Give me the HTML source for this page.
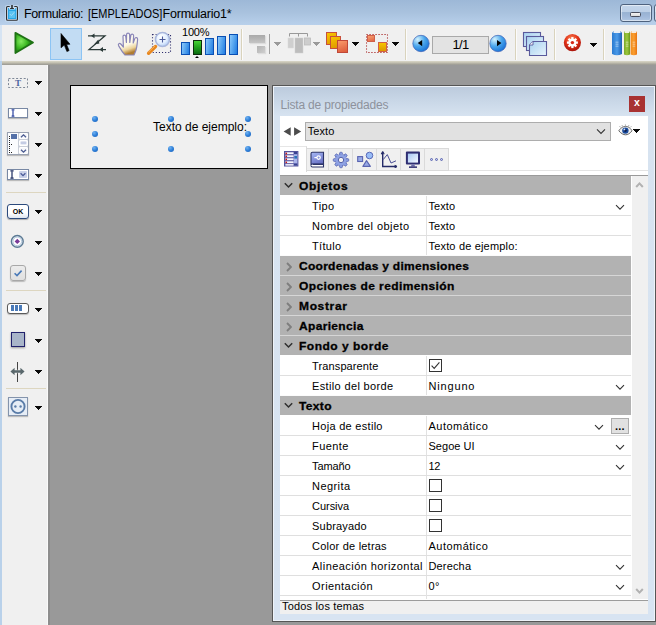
<!DOCTYPE html>
<html lang="es"><head><meta charset="utf-8"><title>Formulario: [EMPLEADOS]Formulario1*</title>
<style>
html,body{margin:0;padding:0}
body{width:656px;height:625px;overflow:hidden;background:#999999;position:relative;font-family:"Liberation Sans",sans-serif;font-size:11px;color:#000}
div,span,svg{position:absolute;box-sizing:border-box}
.t{white-space:nowrap;line-height:1;}
#titlebar{left:0;top:0;width:656px;height:25px;background:linear-gradient(#9db8d7 0,#a9c2de 50%,#b8d0eb 100%)}
#toolbar{left:2px;top:25px;width:654px;height:36px;background:#f0f0f0}
#lstrip{left:0;top:25px;width:2px;height:600px;background:#b9d1ea}
#tan{left:2px;top:61px;width:654px;height:4px;background:linear-gradient(#dad7c8,#c4c1b2 40%,#a5a399 80%,#9a9a96)}
#ltool{left:2px;top:65px;width:46px;height:560px;background:#f0f0f0}
#ltoolb{left:48px;top:65px;width:2px;height:560px;background:#8d8d8d}
.sep{width:1px;height:31px;top:29px;background:#d9d3bd;box-shadow:1px 0 0 #fbfbfb}
.lsep{left:6px;width:40px;height:1px;background:#ddd6c0}
.arr{width:0;height:0;margin-left:-.300px;border-left:3.800px solid transparent;border-right:3.800px solid transparent;border-top:4.500px solid #0c0c0c}
.arrg{width:0;height:0;margin-left:-.300px;border-left:3.800px solid transparent;border-right:3.800px solid transparent;border-top:4.500px solid #999}
#form{left:70px;top:85px;width:198px;height:84px;background:#f0f0f0;border:1px solid #000}
.h{width:6.600px;height:6.600px;border-radius:50%;background:radial-gradient(circle at 35% 30%,#6fb2f2 0,#2e7fd8 50%,#1a5fb8 100%)}
#panel{left:272px;top:85px;width:384px;height:537px;background:linear-gradient(#bbcadc 0,#c9d7e7 15px,#d7e3f0 30px,#d8e4f2 100%);border:1px solid #565656;box-shadow:inset 1px 1px 0 #eef3f9,inset -1px -1px 0 #eef3f9}
#content{left:280px;top:116px;width:368px;height:484px;background:#fff}
#footer{left:280px;top:600px;width:368px;height:14px;background:#f0f0f0;border-top:1px solid #9c9c9c}
.hd{left:280px;width:351px;height:20px;background:#b2b2b2;border-top:1px solid #d2d2d2}
.rw{left:280px;width:351px;height:20px;border-top:1px solid #dfdfdf}
.cb{left:429px;width:13px;height:13px;border:1px solid #333;background:#fff}
</style></head><body>

<div id="titlebar"></div>
<svg style="left:0;top:0" width="24" height="25" viewBox="0 0 24 25">
<rect x="5" y="5" width="14" height="16.800" rx="1.500" fill="#cfe4f8" opacity=".55"/>
<rect x="6.550" y="6.550" width="10.900" height="13.700" rx="1" fill="#cbe0f4" stroke="#2f2f2f" stroke-width="1.100"/>
<rect x="9.700" y="5.800" width="4.600" height="1.600" fill="#b4cce6"/>
<path d="M8 8H9V9.500H15.300V8H16.300V19H8Z" fill="#29a6e6"/>
<rect x="9.200" y="11" width="6" height="7" fill="#5ac2f2"/>
<path d="M10 14.200L11.400 15.600 14.200 12.400" fill="none" stroke="#d4eefc" stroke-width=".9" stroke-dasharray=".9 .5"/>
<rect x="11.200" y="5" width="1.600" height="3.200" fill="#2f2f2f"/>
<rect x="10" y="8" width="4" height=".9" rx=".3" fill="#2f2f2f"/>
</svg>
<span class="t" id="t1" style="left:24px;top:7.600px;font-size:12.500px;letter-spacing:-0.372px;">Formulario:</span>
<span class="t" id="t2" style="left:88.400px;top:7.600px;font-size:12.500px;transform:scaleX(.878);transform-origin:0 0">[EMPLEADOS]</span>
<span class="t" id="t3" style="left:162.600px;top:7.600px;font-size:12.500px;letter-spacing:-0.233px;">Formulario1*</span>
<div style="left:620px;top:4px;width:32px;height:17.500px;border:1px solid #4e627e;border-radius:3px;background:linear-gradient(#c4d6eb 0,#bccfe6 45%,#98b2d2 47%,#a2badb 75%,#b0c7e2 100%);box-shadow:inset 0 0 0 1px rgba(255,255,255,.5)"></div>
<div style="left:630px;top:12px;width:11px;height:5px;border:1px solid #4a4e5c;border-radius:1.500px;background:linear-gradient(#f4f4f4,#dcdcdc)"></div>
<div style="left:654px;top:4px;width:8px;height:17.500px;border:1px solid #4e627e;border-radius:3px;background:linear-gradient(#c4d6eb 0,#bccfe6 45%,#98b2d2 47%,#a2badb 75%,#b0c7e2 100%);box-shadow:inset 0 0 0 1px rgba(255,255,255,.5)"></div>
<div id="toolbar"></div><div id="lstrip"></div><div style="left:0;top:25px;width:2px;height:36px;background:#d6e4f3"></div><div id="tan"></div>
<svg style="left:12px;top:30px" width="24" height="26" viewBox="0 0 24 26">
<defs><radialGradient id="pg" cx=".32" cy=".42" r=".62"><stop offset="0" stop-color="#86ea62"/><stop offset=".55" stop-color="#3cb822"/><stop offset="1" stop-color="#17740f"/></radialGradient></defs>
<path d="M3.400 2.800 L21 12.600 L3.400 23 Z" fill="url(#pg)" stroke="#1e7214" stroke-width="1.800" stroke-linejoin="round"/>
</svg>
<div style="left:50px;top:28px;width:32px;height:32px;background:#c2dcf3;border:1px solid #8cc4f4"></div>
<svg style="left:58px;top:32px" width="16" height="24" viewBox="0 0 16 24">
<path d="M3 1.500 L3 15.800 L6.300 13.100 L8.900 19.600 L11.100 18.600 L8.600 12.400 L12 12.200 Z" fill="#000" stroke="#000" stroke-width=".6" stroke-linejoin="round"/>
</svg>
<svg style="left:86px;top:31px" width="22" height="24" viewBox="0 0 22 24">
<g fill="none" stroke="#2b3a38" stroke-width="1.250"><path d="M2 4.800 H19 L3 18.500 H20"/></g>
<path d="M8.500 2.400 L5 4.800 L8.500 7.200 Z M17 16 L13.400 18.500 L17 21 Z M12.300 8.600 L8 13.400 L13.400 12.400 Z" fill="#2b3a38"/>
</svg>
<svg style="left:116px;top:31px" width="26" height="26" viewBox="0 0 26 26">
<defs><linearGradient id="hg" x1="0" y1="0" x2="0.3" y2="1"><stop offset="0" stop-color="#ffffff"/><stop offset=".62" stop-color="#fdf8e4"/><stop offset=".82" stop-color="#ecd49c"/><stop offset="1" stop-color="#b07c30"/></linearGradient></defs>
<path d="M9 24 C6 21 4 17 2.6 14.6 C1.8 13 3.4 11.6 4.8 13 L7.4 16 L7 5.6 C7 3.6 9.6 3.6 9.8 5.6 L10.4 11.4 L10.6 3.6 C10.6 1.6 13.4 1.6 13.6 3.6 L13.8 11.4 L14.8 4.4 C15 2.6 17.6 2.8 17.6 4.8 L17.2 12 L18.8 7.6 C19.4 5.8 21.8 6.4 21.6 8.4 C21.2 12.8 21 16 20 19 C19.4 21 18.6 22.6 18 24 Z" fill="url(#hg)" stroke="#8a86b8" stroke-width="1.2" stroke-linejoin="round"/>
</svg>
<svg style="left:146px;top:30px" width="28" height="28" viewBox="0 0 28 28">
<defs><radialGradient id="mg" cx=".4" cy=".35" r=".7"><stop offset="0" stop-color="#fff"/><stop offset=".6" stop-color="#e2efff"/><stop offset="1" stop-color="#a9c6f2"/></radialGradient></defs>
<rect x="6.5" y="4.5" width="18" height="18" fill="none" stroke="#2a2a6a" stroke-width="1.100" stroke-dasharray="1.100 2"/>
<path d="M2.600 23.200 L9.500 16.500" stroke="#e8871e" stroke-width="3.400" stroke-linecap="round"/>
<path d="M2.8 21.8 L8.6 16.4" stroke="#f7b45e" stroke-width="1" stroke-linecap="round"/>
<circle cx="16.5" cy="9.5" r="7" fill="url(#mg)" stroke="#a9b7dc" stroke-width="1.6"/>
<path d="M16.5 6.5v6M13.5 9.5h6" stroke="#4a5a9a" stroke-width="1.1"/>
</svg>
<span class="t" id="pct" style="left:182px;top:26.5px;font-size:11px;letter-spacing:-0.214px;">100%</span>
<div style="left:181px;top:42px;width:9px;height:13px;border:1px solid #0a4fb4;background:linear-gradient(100deg,#8cc8fa 0,#5aa8f0 45%,#1f7ae0 100%)"></div>
<div style="left:193px;top:40px;width:9px;height:15px;border:1px solid #0c2e0c;background:linear-gradient(#46d232,#1fa01a 50%,#0a6a10)"></div>
<div style="left:205px;top:38px;width:9px;height:17px;border:1px solid #0a4fb4;background:linear-gradient(100deg,#8cc8fa 0,#5aa8f0 45%,#1f7ae0 100%)"></div>
<div style="left:217px;top:36px;width:9px;height:19px;border:1px solid #0a4fb4;background:linear-gradient(100deg,#8cc8fa 0,#5aa8f0 45%,#1f7ae0 100%)"></div>
<div style="left:229px;top:34px;width:9px;height:21px;border:1px solid #0a4fb4;background:linear-gradient(100deg,#8cc8fa 0,#5aa8f0 45%,#1f7ae0 100%)"></div>
<div style="left:195px;top:56px;width:0;height:0;border-left:2.5px solid transparent;border-right:2.5px solid transparent;border-bottom:2.5px solid #000"></div>
<div class="sep" style="left:241px"></div>
<div style="left:249px;top:35px;width:16px;height:8px;background:linear-gradient(#a9a9a9,#c4c4c4);box-shadow:1px 1px 1px #ddd"></div>
<div style="left:257px;top:46px;width:8px;height:7px;background:linear-gradient(135deg,#b2b2b2,#cfcfcf);box-shadow:1px 1px 1px #ddd"></div>
<div style="left:269px;top:34px;width:1px;height:20px;background:#a0a0a0"></div>
<svg style="left:274px;top:42px" width="7" height="4" viewBox="0 0 7 4" shape-rendering="crispEdges"><path d="M0 0h7v1h-1v1h-1v1h-1v1h-1v-1h-1v-1h-1v-1h-1z" fill="#9a9a9a"/></svg>
<svg style="left:286px;top:31px" width="28" height="26" viewBox="0 0 28 26">
<path d="M3.5 5.5V2.5H21.5V5.5M12.5 2.5V5.5" fill="none" stroke="#999" stroke-width="1"/>
<rect x="2" y="7" width="5.5" height="10" fill="#cfcfcf" stroke="#d8d8d8" stroke-width=".5"/>
<rect x="9" y="7" width="8" height="15" fill="#bdbdbd" stroke="#d0d0d0" stroke-width=".5"/>
<rect x="18.5" y="7" width="6" height="7" fill="#cdcdcd" stroke="#bbb" stroke-width=".8"/>
</svg>
<svg style="left:313px;top:42px" width="7" height="4" viewBox="0 0 7 4" shape-rendering="crispEdges"><path d="M0 0h7v1h-1v1h-1v1h-1v1h-1v-1h-1v-1h-1v-1h-1z" fill="#9a9a9a"/></svg>
<div style="left:326px;top:32px;width:11px;height:13px;border:1px solid #c8503c;background:linear-gradient(160deg,#f8c400,#e09a00)"></div>
<div style="left:330px;top:36px;width:11px;height:13px;border:1px solid #c8503c;background:linear-gradient(160deg,#f8c400,#dc9400)"></div>
<div style="left:337px;top:40px;width:11px;height:13px;border:1px solid #c04838;background:linear-gradient(160deg,#fa9a6a,#dc5a3a)"></div>
<svg style="left:352px;top:42px" width="7" height="4" viewBox="0 0 7 4" shape-rendering="crispEdges"><path d="M0 0h7v1h-1v1h-1v1h-1v1h-1v-1h-1v-1h-1v-1h-1z" fill="#0a0a0a"/></svg>
<svg style="left:366px;top:34px" width="22" height="19" viewBox="0 0 22 19"><rect x=".5" y=".5" width="21" height="18" fill="none" stroke="#a01010" stroke-width="1.100" stroke-dasharray="1.100 1.900"/></svg>
<div style="left:367px;top:35px;width:8px;height:7px;border:1px solid #d0604a;background:linear-gradient(160deg,#f8a070,#e06444)"></div>
<div style="left:378px;top:42px;width:9px;height:10px;border:1px solid #d06048;background:linear-gradient(#f8c400,#dc9800)"></div>
<svg style="left:392px;top:42px" width="7" height="4" viewBox="0 0 7 4" shape-rendering="crispEdges"><path d="M0 0h7v1h-1v1h-1v1h-1v1h-1v-1h-1v-1h-1v-1h-1z" fill="#0a0a0a"/></svg>
<div class="sep" style="left:405px"></div>
<svg style="left:412px;top:34px" width="18" height="19" viewBox="0 0 18 19">
<defs><radialGradient id="bg421" cx=".3" cy=".25" r=".85"><stop offset="0" stop-color="#d4f2fd"/><stop offset=".5" stop-color="#4aa6ec"/><stop offset="1" stop-color="#146cd4"/></radialGradient></defs>
<circle cx="9" cy="9.500" r="8.200" fill="url(#bg421)" stroke="#3f62b4" stroke-width=".7"/>
<path d="M10.200 5.900 L10.200 12.300 L5.800 9.100 Z" fill="#000"/></svg>
<div style="left:432px;top:36px;width:57px;height:18px;border:1px solid #a9a9a9;background:#e3e3e3"></div>
<span class="t" id="pgn" style="left:432px;top:37.700px;width:57px;text-align:center;font-size:13px;letter-spacing:-.700px">1/1</span>
<svg style="left:489px;top:34px" width="18" height="19" viewBox="0 0 18 19">
<defs><radialGradient id="bg498" cx=".3" cy=".25" r=".85"><stop offset="0" stop-color="#d4f2fd"/><stop offset=".5" stop-color="#4aa6ec"/><stop offset="1" stop-color="#146cd4"/></radialGradient></defs>
<circle cx="9" cy="9.500" r="8.200" fill="url(#bg498)" stroke="#3f62b4" stroke-width=".7"/>
<path d="M8 5.900 L8 12.300 L12.400 9.100 Z" fill="#000"/></svg>
<div class="sep" style="left:515px"></div>
<svg style="left:522px;top:31px" width="27" height="26" viewBox="0 0 27 26">
<defs><linearGradient id="pp" x1="0" y1="0" x2="1" y2="1"><stop offset="0" stop-color="#a8d2f0"/><stop offset="1" stop-color="#e8f4fc"/></linearGradient></defs>
<rect x="1.5" y="1.5" width="17" height="14" fill="url(#pp)" stroke="#5a5a9c" stroke-width="1.1"/>
<rect x="4.5" y="5.5" width="17" height="14" fill="url(#pp)" stroke="#5a5a9c" stroke-width="1.1"/>
<path d="M11 10.5 H24.5 V24.5 H7.5 V14 Z" fill="url(#pp)" stroke="#5a5a9c" stroke-width="1.1"/>
<path d="M7.5 14 H11 V10.5" fill="#fff" stroke="#5a5a9c" stroke-width=".9"/>
</svg>
<div class="sep" style="left:554px"></div>
<svg style="left:563px;top:33px" width="19" height="20" viewBox="0 0 19 20">
<defs><radialGradient id="rg" cx=".45" cy=".3" r=".8"><stop offset="0" stop-color="#fa8c5c"/><stop offset=".45" stop-color="#e23218"/><stop offset="1" stop-color="#9a0c08"/></radialGradient></defs>
<circle cx="9.4" cy="9.6" r="8.6" fill="url(#rg)"/>
<g transform="translate(9.4 9.6)" fill="#fff">
<circle r="3.900"/>
<rect x="-1.150" y="-5.500" width="2.300" height="11"/>
<rect x="-1.150" y="-5.500" width="2.300" height="11" transform="rotate(45)"/>
<rect x="-1.150" y="-5.500" width="2.300" height="11" transform="rotate(90)"/>
<rect x="-1.150" y="-5.500" width="2.300" height="11" transform="rotate(135)"/>
<circle r="1.700" fill="#d82818"/>
</g></svg>
<svg style="left:590px;top:43px" width="7" height="4" viewBox="0 0 7 4" shape-rendering="crispEdges"><path d="M0 0h7v1h-1v1h-1v1h-1v1h-1v-1h-1v-1h-1v-1h-1z" fill="#0a0a0a"/></svg>
<div class="sep" style="left:603px"></div>
<svg style="left:611px;top:30px" width="28" height="27" viewBox="0 0 28 27">
<defs>
<linearGradient id="b1" x1="0" y1="0" x2="1" y2="0"><stop offset="0" stop-color="#2a7ad0"/><stop offset=".5" stop-color="#4a9ae8"/><stop offset="1" stop-color="#1e62b8"/></linearGradient>
<linearGradient id="b2" x1="0" y1="0" x2="1" y2="0"><stop offset="0" stop-color="#7aa82a"/><stop offset=".5" stop-color="#9cc83c"/><stop offset="1" stop-color="#6a981e"/></linearGradient>
<linearGradient id="b3" x1="0" y1="0" x2="1" y2="0"><stop offset="0" stop-color="#f08a1a"/><stop offset=".5" stop-color="#fa9e30"/><stop offset="1" stop-color="#e87410"/></linearGradient>
</defs>
<path d="M1 3 L2.5 1 H9.5 L11 3 V24 Q6 26.5 1 24 Z" fill="url(#b1)"/>
<rect x="2.5" y="1" width="7" height="2" fill="#e8eef6"/>
<path d="M13 3 L13.8 1 H18 L19 3 V24.5 Q16 26 13 24.5 Z" fill="url(#b2)"/>
<rect x="13.8" y="1" width="4.2" height="2" fill="#eef2e0"/>
<path d="M19.6 3 L20.4 1 H25 L26 3 V24.5 Q23 26 19.6 24.5 Z" fill="url(#b3)"/>
<rect x="20.4" y="1" width="4.6" height="2" fill="#f6ece0"/>
<g fill="#fff" opacity=".4"><rect x="4.500" y="11.600" width="3" height="1.200"/><rect x="4.500" y="13.600" width="3" height="1.200"/><rect x="4.500" y="15.600" width="3" height="1.200"/>
<rect x="14.800" y="11.600" width="2.600" height="1.200"/><rect x="14.800" y="13.600" width="2.600" height="1.200"/><rect x="14.800" y="15.600" width="2.600" height="1.200"/>
<rect x="21.600" y="11.600" width="2.600" height="1.200"/><rect x="21.600" y="13.600" width="2.600" height="1.200"/><rect x="21.600" y="15.600" width="2.600" height="1.200"/></g>
</svg>
<div id="ltool"></div><div id="ltoolb"></div><div style="left:47px;top:65px;width:1px;height:560px;background:#f9f9f9"></div>
<svg style="left:8px;top:78px" width="20" height="10" viewBox="0 0 20 10"><rect x=".5" y=".5" width="19" height="9" fill="none" stroke="#7d8796" stroke-width="1" stroke-dasharray="2 1.8"/></svg>
<span class="t" style="left:8px;top:79px;width:20px;text-align:center;font-family:'Liberation Serif',serif;font-weight:bold;font-size:9px;color:#4a64a0">T</span>
<svg style="left:35px;top:81px" width="7" height="4" viewBox="0 0 7 4" shape-rendering="crispEdges"><path d="M0 0h7v1h-1v1h-1v1h-1v1h-1v-1h-1v-1h-1v-1h-1z" fill="#0a0a0a"/></svg>
<div style="left:8px;top:108px;width:20px;height:10px;border:1px solid #7888a4;background:#fff;box-shadow:0 1px 1px #bbb"></div>
<svg style="left:10px;top:109px" width="6" height="8" viewBox="0 0 6 8"><path d="M1.6 .9h1L3 1.3 3.400 .9h1M1.600 7.100h1L3 6.700l.400 .400h1M3 1.300v5.400" fill="none" stroke="#2a42a0" stroke-width="1.200"/></svg>
<svg style="left:35px;top:112px" width="7" height="4" viewBox="0 0 7 4" shape-rendering="crispEdges"><path d="M0 0h7v1h-1v1h-1v1h-1v1h-1v-1h-1v-1h-1v-1h-1z" fill="#0a0a0a"/></svg>
<div style="left:7px;top:132px;width:22px;height:23px;border:1px solid #9aa2b2;background:#c9ced8;box-shadow:0 1px 1px #bbb"></div>
<div style="left:8px;top:133px;width:10px;height:21px;background:#fbfcfe"></div>
<div style="left:11px;top:134px;width:6px;height:5px;background:#5470a8"></div>
<div style="left:9px;top:136px;width:1px;height:17px;border-left:1px dotted #222"></div>
<div style="left:11px;top:144px;width:1px;height:1px;background:#222"></div>
<div style="left:11px;top:152px;width:1px;height:1px;background:#222"></div>
<div style="left:19px;top:133px;width:9px;height:6px;background:#f6f7fb;border:1px solid #fff;border-radius:1px"></div>
<div style="left:19px;top:140px;width:9px;height:6px;background:#f6f7fb;border:1px solid #fff;border-radius:1px"></div>
<div style="left:19px;top:147px;width:9px;height:7px;background:#f6f7fb;border:1px solid #fff;border-radius:1px"></div>
<svg style="left:19px;top:133px" width="9" height="21" viewBox="0 0 9 21"><path d="M2 4.2L4.5 1.8 7 4.2M2 16.8L4.5 19.2 7 16.8" fill="none" stroke="#4a5a90" stroke-width="1.3"/><rect x="1.6" y="8.6" width="5.8" height="2.6" rx="1" fill="#c4cce4"/></svg>
<svg style="left:35px;top:143px" width="7" height="4" viewBox="0 0 7 4" shape-rendering="crispEdges"><path d="M0 0h7v1h-1v1h-1v1h-1v1h-1v-1h-1v-1h-1v-1h-1z" fill="#0a0a0a"/></svg>
<div style="left:7px;top:169px;width:22px;height:11px;border:1px solid #7888a4;background:#fff;box-shadow:0 1px 1px #bbb"></div>
<svg style="left:9px;top:170px" width="6" height="9" viewBox="0 0 6 9"><path d="M1.400 .9h1.200L3 1.300 3.400 .9h1.200M1.400 8.100h1.200L3 7.700l.400 .400h1.200M3 1.300v6.400" fill="none" stroke="#1a2a60" stroke-width="1.200"/></svg>
<div style="left:19px;top:171px;width:8px;height:7px;background:#c8d0e8;border-radius:1px"></div>
<svg style="left:19px;top:171px" width="8" height="7" viewBox="0 0 8 7"><path d="M1.6 2.2L4 4.6 6.4 2.2" fill="none" stroke="#4a5a98" stroke-width="1.3"/></svg>
<svg style="left:35px;top:174px" width="7" height="4" viewBox="0 0 7 4" shape-rendering="crispEdges"><path d="M0 0h7v1h-1v1h-1v1h-1v1h-1v-1h-1v-1h-1v-1h-1z" fill="#0a0a0a"/></svg>
<div class="lsep" style="top:192px"></div>
<div style="left:7px;top:204px;width:22px;height:15px;border:1.5px solid #2c4a7c;border-radius:3px;background:linear-gradient(#fff 60%,#dfe6f0);box-shadow:0 1px 1px #aaa"></div>
<span class="t" style="left:7px;top:208px;width:22px;text-align:center;font-weight:bold;font-size:7px;letter-spacing:0">OK</span>
<svg style="left:35px;top:210px" width="7" height="4" viewBox="0 0 7 4" shape-rendering="crispEdges"><path d="M0 0h7v1h-1v1h-1v1h-1v1h-1v-1h-1v-1h-1v-1h-1z" fill="#0a0a0a"/></svg>
<svg style="left:9px;top:233px" width="17" height="17" viewBox="0 0 17 17">
<circle cx="8.300" cy="8.400" r="5.900" fill="#dfe8f0" stroke="#5c7a94" stroke-width="1.400"/>
<circle cx="8.300" cy="8.400" r="4.300" fill="#fff" stroke="#b4c8dc" stroke-width="1"/>
<path d="M8.300 5.700L11 8.400 8.300 11.100 5.600 8.400Z" fill="#7a3a98"/></svg>
<svg style="left:35px;top:241px" width="7" height="4" viewBox="0 0 7 4" shape-rendering="crispEdges"><path d="M0 0h7v1h-1v1h-1v1h-1v1h-1v-1h-1v-1h-1v-1h-1z" fill="#0a0a0a"/></svg>
<div style="left:10px;top:265px;width:16px;height:16px;border:1px solid #a8a8a8;border-radius:3px;background:linear-gradient(#ececec,#e0e0e0);box-shadow:0 1px 1px #bbb"></div>
<svg style="left:10px;top:265px" width="16" height="16" viewBox="0 0 16 16"><path d="M4.6 8.2L7 10.6 11.6 5.6" fill="none" stroke="#4a7ab8" stroke-width="1.6"/></svg>
<svg style="left:35px;top:272px" width="7" height="4" viewBox="0 0 7 4" shape-rendering="crispEdges"><path d="M0 0h7v1h-1v1h-1v1h-1v1h-1v-1h-1v-1h-1v-1h-1z" fill="#0a0a0a"/></svg>
<div class="lsep" style="top:290px"></div>
<div style="left:7px;top:303px;width:22px;height:11px;border:1.3px solid #5a5a5a;border-radius:3px;background:#fff;box-shadow:0 1px 1px #bbb"></div>
<div style="left:11px;top:305px;width:3px;height:6px;background:#4a7ab8"></div>
<div style="left:15px;top:305px;width:3px;height:6px;background:#4a7ab8"></div>
<div style="left:19px;top:305px;width:3px;height:6px;background:#4a7ab8"></div>
<svg style="left:35px;top:308px" width="7" height="4" viewBox="0 0 7 4" shape-rendering="crispEdges"><path d="M0 0h7v1h-1v1h-1v1h-1v1h-1v-1h-1v-1h-1v-1h-1z" fill="#0a0a0a"/></svg>
<div style="left:11px;top:332px;width:14px;height:15px;border:1px solid #22226c;background:#a9b5c9;box-shadow:0 1px 2px #999"></div>
<svg style="left:35px;top:339px" width="7" height="4" viewBox="0 0 7 4" shape-rendering="crispEdges"><path d="M0 0h7v1h-1v1h-1v1h-1v1h-1v-1h-1v-1h-1v-1h-1z" fill="#0a0a0a"/></svg>
<svg style="left:9px;top:361px" width="18" height="22" viewBox="0 0 18 22">
<path d="M8.5 1V21" stroke="#444" stroke-width="1"/>
<path d="M1.400 10.500L5.600 6.800V9.300H11.400V6.800L15.600 10.500L11.400 14.200V11.700H5.600V14.200Z" fill="#5a686c" stroke="#fafafa" stroke-width=".8" paint-order="stroke"/></svg>
<svg style="left:35px;top:370px" width="7" height="4" viewBox="0 0 7 4" shape-rendering="crispEdges"><path d="M0 0h7v1h-1v1h-1v1h-1v1h-1v-1h-1v-1h-1v-1h-1z" fill="#0a0a0a"/></svg>
<div class="lsep" style="top:388px"></div>
<div style="left:8px;top:397px;width:20px;height:19px;border:1px solid #8494ac;background:#e6edf6;box-shadow:0 1px 1px #bbb"></div>
<svg style="left:8px;top:397px" width="20" height="19" viewBox="0 0 20 19"><circle cx="10" cy="9.500" r="6.600" fill="none" stroke="#5a7ca8" stroke-width="1.900"/><circle cx="7.4" cy="9.5" r="1.2" fill="#5a7ca8"/><circle cx="12.6" cy="9.5" r="1.2" fill="#5a7ca8"/></svg>
<svg style="left:35px;top:406px" width="7" height="4" viewBox="0 0 7 4" shape-rendering="crispEdges"><path d="M0 0h7v1h-1v1h-1v1h-1v1h-1v-1h-1v-1h-1v-1h-1z" fill="#0a0a0a"/></svg>
<div id="form"></div>
<div class="h" style="left:91.7px;top:115.7px"></div>
<div class="h" style="left:91.7px;top:130.7px"></div>
<div class="h" style="left:91.7px;top:145.7px"></div>
<div class="h" style="left:167.7px;top:115.7px"></div>
<div class="h" style="left:167.7px;top:145.7px"></div>
<div class="h" style="left:244.7px;top:115.7px"></div>
<div class="h" style="left:244.7px;top:130.7px"></div>
<div class="h" style="left:244.7px;top:145.7px"></div>
<span class="t" id="ft" style="left:153px;top:120.5px;font-size:12px;letter-spacing:-0.004px;">Texto de ejemplo:</span>
<div id="panel"></div>
<span class="t" id="pt" style="left:280.5px;top:98.5px;font-size:12px;color:#8d929c;letter-spacing:-0.180px;">Lista de propiedades</span>
<div style="left:629px;top:96px;width:16px;height:16px;background:#a83232"></div>
<span class="t" style="left:629px;top:97.300px;width:16px;text-align:center;font-weight:bold;font-size:10.500px;color:#fff">x</span>
<div id="content"></div>
<svg style="left:283px;top:127px" width="19" height="9" viewBox="0 0 19 9"><path d="M7.700 .2V8.800L.600 4.500ZM11.100 .2V8.800L18.200 4.500Z" fill="#4c4c4c"/></svg>
<div style="left:305px;top:122px;width:306px;height:19px;border:1px solid #adadad;background:#e1e1e1"></div>
<span class="t" id="cbt" style="left:307.800px;top:126px;font-size:11px;letter-spacing:0.051px;">Texto</span>
<svg style="left:596px;top:128px" width="10" height="7" viewBox="0 0 10 7"><path d="M1 1.4L5 5.4 9 1.4" fill="none" stroke="#333" stroke-width="1.1"/></svg>
<svg style="left:618px;top:124px" width="15" height="13" viewBox="0 0 15 13">
<path d="M.8 6.8C3 3.2 6 2.4 7.6 2.4S12 3.2 14 6.8C12 9.6 9.6 10.8 7.6 10.8S3 9.6 .8 6.800Z" fill="#f4f4f4" stroke="#555" stroke-width=".9"/>
<circle cx="7.4" cy="6.6" r="3.2" fill="#1a4a9a"/><circle cx="7.4" cy="6.6" r="1.4" fill="#0a1a4a"/><circle cx="6.4" cy="5.4" r=".9" fill="#cfe2ff"/>
<path d="M2.4 3.4L1.6 2M4.4 2.4L4 1M7.4 1.8V.4M10.4 2.4L11 1M12.4 3.4L13.4 2.200" stroke="#777" stroke-width=".6"/></svg>
<svg style="left:633px;top:129px" width="7" height="4" viewBox="0 0 7 4" shape-rendering="crispEdges"><path d="M0 0h7v1h-1v1h-1v1h-1v1h-1v-1h-1v-1h-1v-1h-1z" fill="#0a0a0a"/></svg>
<div style="left:280px;top:170px;width:368px;height:1px;background:#e3e3e3"></div>
<div style="left:306px;top:148px;width:143px;height:23px;background:#f0f0f0;border:1px solid #dadada"></div>
<div style="left:328px;top:149px;width:1px;height:21px;background:#dadada"></div>
<div style="left:352px;top:149px;width:1px;height:21px;background:#dadada"></div>
<div style="left:376px;top:149px;width:1px;height:21px;background:#dadada"></div>
<div style="left:400px;top:149px;width:1px;height:21px;background:#dadada"></div>
<div style="left:424px;top:149px;width:1px;height:21px;background:#dadada"></div>
<div style="left:280px;top:146px;width:27px;height:26px;background:#fff;border-top:1px solid #e6e6e6;border-right:1px solid #dadada"></div>
<svg style="left:284px;top:151px" width="15" height="16" viewBox="0 0 15 16">
<rect x=".5" y=".5" width="13.400" height="14.500" fill="#6262a8" stroke="#54549c" stroke-width="1"/>
<g fill="#f4f4fc"><rect x="1.400" y="1.300" width="8.200" height="1.800"/><rect x="1.400" y="4.300" width="8.200" height="1.800"/><rect x="1.400" y="7.300" width="8.200" height="1.800"/><rect x="1.400" y="10.300" width="8.200" height="1.800"/><rect x="1.400" y="13.100" width="8.200" height="1.500"/></g>
<rect x="9.900" y="1" width="3.500" height="13.600" fill="#aab4ea"/>
<rect x="9.900" y="1" width="3.500" height="2.200" fill="#3a4290"/><rect x="9.900" y="12.400" width="3.500" height="2.200" fill="#3a4290"/>
<rect x="10.300" y="5" width="2.700" height="2.600" fill="#2a72b8"/>
<g fill="#c81818"><circle cx="2.300" cy="2.400" r=".85"/><circle cx="2.300" cy="5.300" r=".85"/><circle cx="2.300" cy="8.300" r=".85"/><circle cx="2.300" cy="11.300" r=".85"/></g>
</svg>
<svg style="left:310px;top:151px" width="15" height="17" viewBox="0 0 15 17">
<defs><linearGradient id="bk" x1="0" y1="0" x2=".4" y2="1"><stop offset="0" stop-color="#a8baf6"/><stop offset="1" stop-color="#6870c4"/></linearGradient></defs>
<path d="M2.500 1.200H13.500V13H2.500Q1 13 1 14.500V2.700Q1 1.200 2.500 1.200Z" fill="url(#bk)" stroke="#2c3468" stroke-width="1.100"/>
<path d="M1 14.500Q1 16 2.500 16H13.500V13.400H2.500" fill="#fff" stroke="#2c3468" stroke-width="1.100"/>
<circle cx="8.600" cy="6.600" r="1.700" fill="none" stroke="#fff" stroke-width="1.200"/><path d="M4.400 6.600H7" stroke="#fff" stroke-width="1.200"/>
</svg>
<svg style="left:332px;top:151px" width="18" height="18" viewBox="-9 -9 18 18"><g fill="#8ea2e4" stroke="#5c6ab4" stroke-width=".9"><rect x="-1.350" y="-7.700" width="2.700" height="3" rx=".9" transform="rotate(0)"/><rect x="-1.350" y="-7.700" width="2.700" height="3" rx=".9" transform="rotate(45)"/><rect x="-1.350" y="-7.700" width="2.700" height="3" rx=".9" transform="rotate(90)"/><rect x="-1.350" y="-7.700" width="2.700" height="3" rx=".9" transform="rotate(135)"/><rect x="-1.350" y="-7.700" width="2.700" height="3" rx=".9" transform="rotate(180)"/><rect x="-1.350" y="-7.700" width="2.700" height="3" rx=".9" transform="rotate(225)"/><rect x="-1.350" y="-7.700" width="2.700" height="3" rx=".9" transform="rotate(270)"/><rect x="-1.350" y="-7.700" width="2.700" height="3" rx=".9" transform="rotate(315)"/></g><circle r="4.300" fill="none" stroke="#8ea2e4" stroke-width="3"/><circle r="5.900" fill="none" stroke="#5c6ab4" stroke-width=".7" stroke-dasharray="1.900 2.730" stroke-dashoffset="-1.400"/><circle r="2.700" fill="#f2f2f2" stroke="#5562ac" stroke-width="1"/></svg>
<svg style="left:356px;top:151px" width="18" height="17" viewBox="0 0 18 17">
<rect x="1.700" y="5.600" width="4.900" height="4.900" fill="#98aae6" stroke="#5a64b0" stroke-width="1.100"/>
<circle cx="13.500" cy="4.500" r="3.300" fill="#98bcf6" stroke="#5a6ab8" stroke-width="1"/>
<path d="M10.500 9.600L14.400 15.400H6.900Z" fill="#98aae6" stroke="#5a64b0" stroke-width="1.100" stroke-linejoin="round"/></svg>
<svg style="left:380px;top:151px" width="18" height="17" viewBox="0 0 18 17">
<path d="M2.700 1V15.500H16.500" fill="none" stroke="#242a68" stroke-width="1.400"/>
<path d="M2.700 .6L1.200 3.200M2.700 .6L4.200 3.200M16.900 15.500L14.600 14.100M16.900 15.500L14.600 16.900" stroke="#242a68" stroke-width="1.100"/>
<path d="M3.200 8.600L7.300 3.600 11 12 16 9.800" fill="none" stroke="#4a4e94" stroke-width="1"/></svg>
<svg style="left:404px;top:151px" width="18" height="18" viewBox="0 0 18 18">
<defs><linearGradient id="mo" x1="0" y1="0" x2="1" y2="1"><stop offset="0" stop-color="#a8c8f4"/><stop offset="1" stop-color="#f4f8ff"/></linearGradient></defs>
<rect x="1.900" y=".6" width="14.100" height="13" rx="1" fill="#2e2e72"/>
<rect x="3.900" y="2.600" width="10.100" height="9" fill="url(#mo)"/>
<path d="M7.600 13.600H10.400L11.100 15.500H6.900Z" fill="#6a6aaa"/><rect x="5" y="15.400" width="8" height="1.500" fill="#2e2e72"/></svg>
<div style="left:429.65px;top:157.750px;width:3.500px;height:3.500px;border-radius:50%;border:1.100px solid #5a64b0;background:#c4ccee"></div>
<div style="left:434.65px;top:157.750px;width:3.500px;height:3.500px;border-radius:50%;border:1.100px solid #5a64b0;background:#c4ccee"></div>
<div style="left:439.65px;top:157.750px;width:3.500px;height:3.500px;border-radius:50%;border:1.100px solid #5a64b0;background:#c4ccee"></div>
<div class="hd" style="top:175px;border-top-color:#9a9a9a"></div>
<svg style="left:284px;top:182px" width="9" height="7" viewBox="0 0 9 7"><path d="M.800 1.200L4.500 5 8.200 1.200" fill="none" stroke="#303030" stroke-width="1.500"/></svg>
<span class="t" id="h0" style="left:299.400px;top:180.5px;font-weight:bold;font-size:11px;-webkit-text-stroke:.3px #000;transform:scaleX(1.09);transform-origin:0 0;letter-spacing:0.604px;">Objetos</span>
<div class="rw" style="top:195px;border-top-color:#fff"></div>
<span class="t" id="n1" style="left:312.100px;top:200.5px;letter-spacing:0.333px;">Tipo</span>
<span class="t" id="v1" style="left:428.500px;top:200.5px;letter-spacing:0.051px;">Texto</span>
<svg style="left:615px;top:203.6px" width="10" height="7" viewBox="0 0 10 7"><path d="M1 1.200L5 5.200 9 1.200" fill="none" stroke="#333" stroke-width="1.100"/></svg>
<div class="rw" style="top:215px;border-top-color:#dfdfdf"></div>
<span class="t" id="n2" style="left:312.100px;top:220.5px;letter-spacing:0.444px;">Nombre del objeto</span>
<span class="t" id="v2" style="left:428.500px;top:220.5px;letter-spacing:0.051px;">Texto</span>
<div class="rw" style="top:235px;border-top-color:#dfdfdf"></div>
<span class="t" id="n3" style="left:312.100px;top:240.5px;letter-spacing:0.297px;">Título</span>
<span class="t" id="v3" style="left:428.500px;top:240.5px;letter-spacing:0.174px;">Texto de ejemplo:</span>
<div class="hd" style="top:255px;border-top-color:#fbfbfb"></div>
<svg style="left:286px;top:261.5px" width="6" height="10" viewBox="0 0 6 10"><path d="M1 1L5 5 1 9" fill="none" stroke="#7e7e7e" stroke-width="1.900"/></svg>
<span class="t" id="h4" style="left:299.400px;top:260.5px;font-weight:bold;font-size:11px;-webkit-text-stroke:.3px #000;transform:scaleX(1.09);transform-origin:0 0;letter-spacing:0.254px;">Coordenadas y dimensiones</span>
<div class="hd" style="top:275px;border-top-color:#d6d6d6"></div>
<svg style="left:286px;top:281.5px" width="6" height="10" viewBox="0 0 6 10"><path d="M1 1L5 5 1 9" fill="none" stroke="#7e7e7e" stroke-width="1.900"/></svg>
<span class="t" id="h5" style="left:299.400px;top:280.5px;font-weight:bold;font-size:11px;-webkit-text-stroke:.3px #000;transform:scaleX(1.09);transform-origin:0 0;letter-spacing:0.367px;">Opciones de redimensión</span>
<div class="hd" style="top:295px;border-top-color:#d6d6d6"></div>
<svg style="left:286px;top:301.5px" width="6" height="10" viewBox="0 0 6 10"><path d="M1 1L5 5 1 9" fill="none" stroke="#7e7e7e" stroke-width="1.900"/></svg>
<span class="t" id="h6" style="left:299.400px;top:300.5px;font-weight:bold;font-size:11px;-webkit-text-stroke:.3px #000;transform:scaleX(1.09);transform-origin:0 0;letter-spacing:0.599px;">Mostrar</span>
<div class="hd" style="top:315px;border-top-color:#d6d6d6"></div>
<svg style="left:286px;top:321.5px" width="6" height="10" viewBox="0 0 6 10"><path d="M1 1L5 5 1 9" fill="none" stroke="#7e7e7e" stroke-width="1.900"/></svg>
<span class="t" id="h7" style="left:299.400px;top:320.5px;font-weight:bold;font-size:11px;-webkit-text-stroke:.3px #000;transform:scaleX(1.09);transform-origin:0 0;letter-spacing:0.314px;">Apariencia</span>
<div class="hd" style="top:335px;border-top-color:#d6d6d6"></div>
<svg style="left:284px;top:342px" width="9" height="7" viewBox="0 0 9 7"><path d="M.800 1.200L4.500 5 8.200 1.200" fill="none" stroke="#303030" stroke-width="1.500"/></svg>
<span class="t" id="h8" style="left:299.400px;top:340.5px;font-weight:bold;font-size:11px;-webkit-text-stroke:.3px #000;transform:scaleX(1.09);transform-origin:0 0;letter-spacing:0.468px;">Fondo y borde</span>
<div class="rw" style="top:355px;border-top-color:#fff"></div>
<span class="t" id="n9" style="left:312.100px;top:360.5px;letter-spacing:0.115px;">Transparente</span>
<div class="cb" style="top:359px"></div><svg style="left:429px;top:359px" width="13" height="13" viewBox="0 0 13 13"><path d="M2.600 6.600L5.200 9.400 10.400 3.400" fill="none" stroke="#333" stroke-width="1.100"/></svg>
<div class="rw" style="top:375px;border-top-color:#dfdfdf"></div>
<span class="t" id="n10" style="left:312.100px;top:380.5px;letter-spacing:0.345px;">Estilo del borde</span>
<span class="t" id="v10" style="left:428.500px;top:380.5px;letter-spacing:0.836px;">Ninguno</span>
<svg style="left:615px;top:383.6px" width="10" height="7" viewBox="0 0 10 7"><path d="M1 1.200L5 5.200 9 1.200" fill="none" stroke="#333" stroke-width="1.100"/></svg>
<div class="hd" style="top:395px;border-top-color:#fbfbfb"></div>
<svg style="left:284px;top:402px" width="9" height="7" viewBox="0 0 9 7"><path d="M.800 1.200L4.500 5 8.200 1.200" fill="none" stroke="#303030" stroke-width="1.500"/></svg>
<span class="t" id="h11" style="left:299.400px;top:400.5px;font-weight:bold;font-size:11px;-webkit-text-stroke:.3px #000;transform:scaleX(1.09);transform-origin:0 0;letter-spacing:0.319px;">Texto</span>
<div class="rw" style="top:415px;border-top-color:#fff"></div>
<span class="t" id="n12" style="left:312.100px;top:420.5px;letter-spacing:0.288px;">Hoja de estilo</span>
<span class="t" id="v12" style="left:428.500px;top:420.5px;letter-spacing:0.485px;">Automático</span>
<svg style="left:594px;top:423.6px" width="10" height="7" viewBox="0 0 10 7"><path d="M1 1.200L5 5.200 9 1.200" fill="none" stroke="#333" stroke-width="1.100"/></svg>
<div style="left:611px;top:418px;width:18px;height:16px;border:1px solid #adadad;background:#e1e1e1"></div>
<span class="t" style="left:611px;top:420.6px;width:18px;text-align:center;font-size:11px;font-weight:bold;letter-spacing:.200px">...</span>
<div class="rw" style="top:435px;border-top-color:#dfdfdf"></div>
<span class="t" id="n13" style="left:312.100px;top:440.5px;letter-spacing:0.410px;">Fuente</span>
<span class="t" id="v13" style="left:428.500px;top:440.5px;letter-spacing:0.018px;">Segoe UI</span>
<svg style="left:615px;top:443.6px" width="10" height="7" viewBox="0 0 10 7"><path d="M1 1.200L5 5.200 9 1.200" fill="none" stroke="#333" stroke-width="1.100"/></svg>
<div class="rw" style="top:455px;border-top-color:#dfdfdf"></div>
<span class="t" id="n14" style="left:312.100px;top:460.5px;letter-spacing:-0.128px;">Tamaño</span>
<span class="t" id="v14" style="left:428.500px;top:460.5px;letter-spacing:-0.250px;">12</span>
<svg style="left:615px;top:463.6px" width="10" height="7" viewBox="0 0 10 7"><path d="M1 1.200L5 5.200 9 1.200" fill="none" stroke="#333" stroke-width="1.100"/></svg>
<div class="rw" style="top:475px;border-top-color:#dfdfdf"></div>
<span class="t" id="n15" style="left:312.100px;top:480.5px;letter-spacing:0.422px;">Negrita</span>
<div class="cb" style="top:479px"></div>
<div class="rw" style="top:495px;border-top-color:#dfdfdf"></div>
<span class="t" id="n16" style="left:312.100px;top:500.5px;letter-spacing:-0.049px;">Cursiva</span>
<div class="cb" style="top:499px"></div>
<div class="rw" style="top:515px;border-top-color:#dfdfdf"></div>
<span class="t" id="n17" style="left:312.100px;top:520.5px;letter-spacing:0.173px;">Subrayado</span>
<div class="cb" style="top:519px"></div>
<div class="rw" style="top:535px;border-top-color:#dfdfdf"></div>
<span class="t" id="n18" style="left:312.100px;top:540.5px;letter-spacing:0.211px;">Color de letras</span>
<span class="t" id="v18" style="left:428.500px;top:540.5px;letter-spacing:0.485px;">Automático</span>
<div class="rw" style="top:555px;border-top-color:#dfdfdf"></div>
<span class="t" id="n19" style="left:312.100px;top:560.5px;letter-spacing:0.439px;">Alineación horizontal</span>
<span class="t" id="v19" style="left:428.500px;top:560.5px;letter-spacing:0.154px;">Derecha</span>
<svg style="left:615px;top:563.6px" width="10" height="7" viewBox="0 0 10 7"><path d="M1 1.200L5 5.200 9 1.200" fill="none" stroke="#333" stroke-width="1.100"/></svg>
<div class="rw" style="top:575px;border-top-color:#dfdfdf"></div>
<span class="t" id="n20" style="left:312.100px;top:580.5px;letter-spacing:0.423px;">Orientación</span>
<span class="t" id="v20" style="left:428.500px;top:580.5px;letter-spacing:0.469px;">0°</span>
<svg style="left:615px;top:583.6px" width="10" height="7" viewBox="0 0 10 7"><path d="M1 1.200L5 5.200 9 1.200" fill="none" stroke="#333" stroke-width="1.100"/></svg>
<div style="left:280px;top:595px;width:351px;height:1px;background:#dfdfdf"></div>
<div style="left:426px;top:196px;width:1px;height:19px;background:#e2e2e2"></div>
<div style="left:426px;top:216px;width:1px;height:19px;background:#e2e2e2"></div>
<div style="left:426px;top:236px;width:1px;height:19px;background:#e2e2e2"></div>
<div style="left:426px;top:356px;width:1px;height:19px;background:#e2e2e2"></div>
<div style="left:426px;top:376px;width:1px;height:19px;background:#e2e2e2"></div>
<div style="left:426px;top:416px;width:1px;height:19px;background:#e2e2e2"></div>
<div style="left:426px;top:436px;width:1px;height:19px;background:#e2e2e2"></div>
<div style="left:426px;top:456px;width:1px;height:19px;background:#e2e2e2"></div>
<div style="left:426px;top:476px;width:1px;height:19px;background:#e2e2e2"></div>
<div style="left:426px;top:496px;width:1px;height:19px;background:#e2e2e2"></div>
<div style="left:426px;top:516px;width:1px;height:19px;background:#e2e2e2"></div>
<div style="left:426px;top:536px;width:1px;height:19px;background:#e2e2e2"></div>
<div style="left:426px;top:556px;width:1px;height:19px;background:#e2e2e2"></div>
<div style="left:426px;top:576px;width:1px;height:19px;background:#e2e2e2"></div>
<div style="left:426px;top:595px;width:1px;height:4px;background:#e2e2e2"></div>
<div style="left:280px;top:175px;width:368px;height:1px;background:#9a9a9a"></div>
<div style="left:632px;top:176px;width:16px;height:423px;background:#f0f0f0"></div>
<svg style="left:635px;top:181px" width="9" height="8" viewBox="0 0 9 8"><path d="M1.200 6L4.500 2.400 7.800 6" fill="none" stroke="#b2b2b2" stroke-width="2"/></svg>
<svg style="left:635px;top:587px" width="9" height="8" viewBox="0 0 9 8"><path d="M1.200 2L4.500 5.600 7.800 2" fill="none" stroke="#b2b2b2" stroke-width="2"/></svg>
<div id="footer"></div>
<span class="t" id="ftr" style="left:282px;top:601px;letter-spacing:0.180px;">Todos los temas</span>
</body></html>
